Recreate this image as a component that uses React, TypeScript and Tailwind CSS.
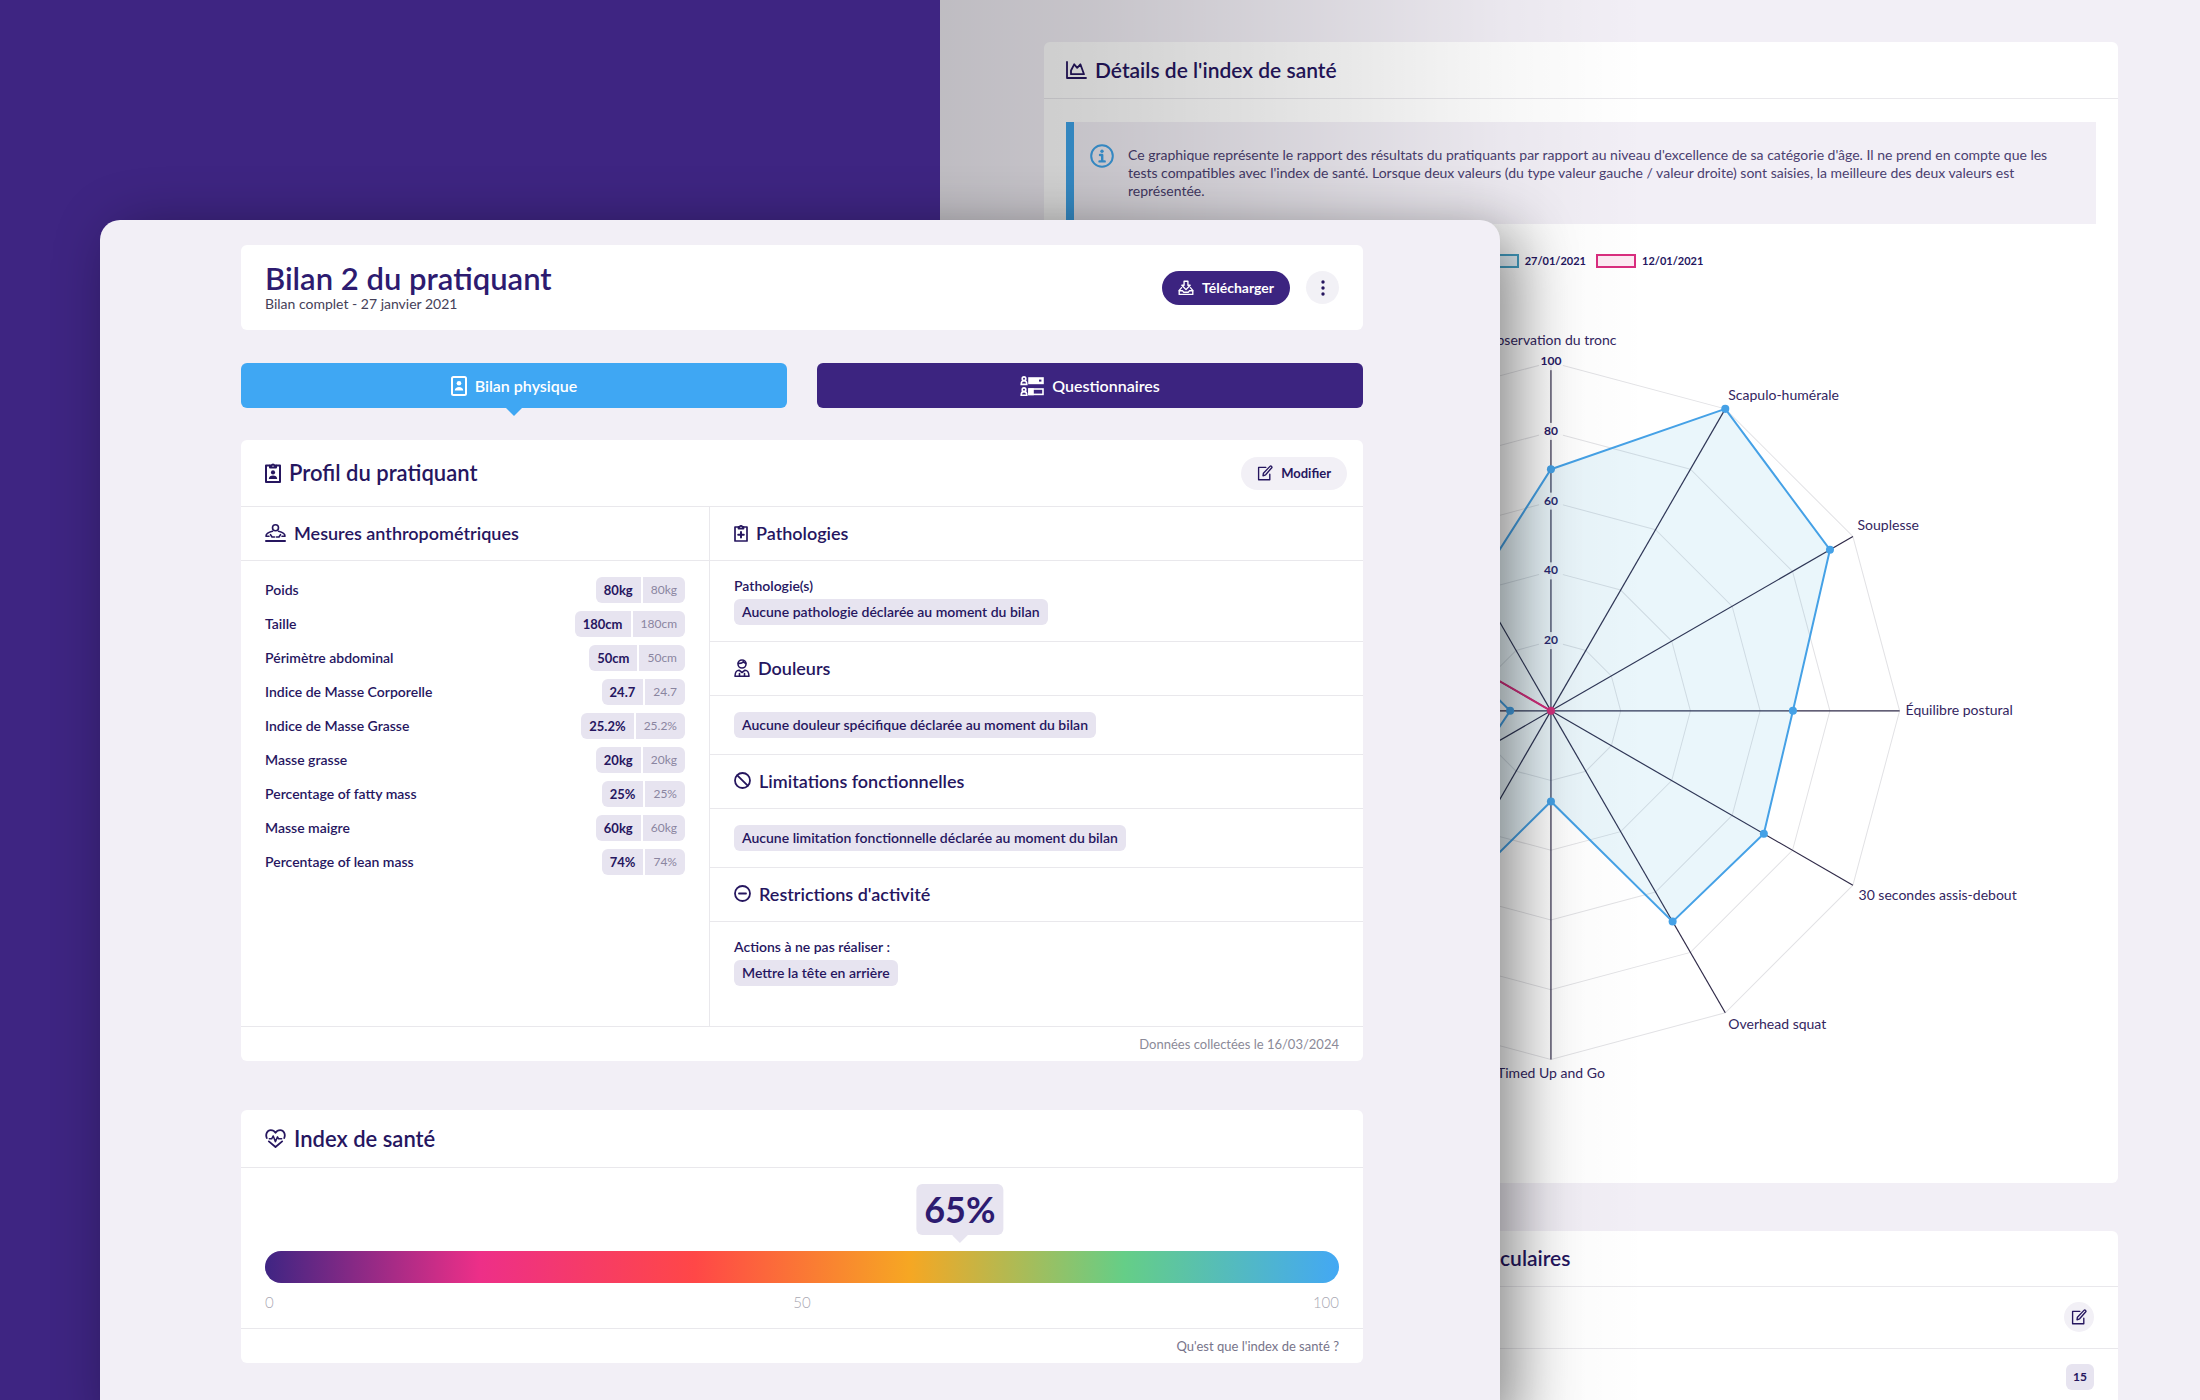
import type { ReactNode } from "react";

type IconProps = { className?: string };

function Svg({ className, box, children, width = 2 }: { className?: string; box: string; children: ReactNode; width?: number }) {
  return (
    <svg
      className={className}
      viewBox={box}
      fill="none"
      stroke="currentColor"
      strokeWidth={width}
      strokeLinecap="round"
      strokeLinejoin="round"
      aria-hidden="true"
    >
      {children}
    </svg>
  );
}

const DownloadIcon = ({ className }: IconProps) => (
  <Svg className={className} box="0 0 20 20" width={1.7}>
    <path d="M7.6 1.5h4.8v5h2.8L10 12 4.8 6.5h2.8z" />
    <path d="M4.5 9.5 1.5 13v5h17v-5l-3-3.5" />
    <path d="M1.5 13.5h4.3l1.2 1.8h6l1.2-1.8h4.3" />
  </Svg>
);

const DotsIcon = ({ className }: IconProps) => (
  <svg className={className} viewBox="0 0 4 16" fill="currentColor" aria-hidden="true">
    <circle cx="2" cy="2" r="1.7" />
    <circle cx="2" cy="8" r="1.7" />
    <circle cx="2" cy="14" r="1.7" />
  </svg>
);

const BadgeIcon = ({ className }: IconProps) => (
  <Svg className={className} box="0 0 16 20">
    <rect x="1" y="1" width="14" height="18" rx="1.5" />
    <circle cx="8" cy="7.2" r="2.3" fill="currentColor" stroke="none" />
    <path d="M3.8 14.6c0-2.4 2-3.6 4.2-3.6s4.2 1.2 4.2 3.6z" fill="currentColor" stroke="none" />
  </Svg>
);

const FormIcon = ({ className }: IconProps) => (
  <svg className={className} viewBox="0 0 24 20" fill="none" stroke="currentColor" strokeWidth="1.6" aria-hidden="true">
    <circle cx="4" cy="2.7" r="1.8" />
    <path d="M1.2 8.4c0-2.2.9-3.6 2.8-3.6s2.8 1.4 2.8 3.6z" />
    <circle cx="4" cy="13.7" r="1.8" />
    <path d="M1.2 19.2c0-2.2.9-3.6 2.8-3.6s2.8 1.4 2.8 3.6z" />
    <rect x="9" y="2" width="14" height="5.4" fill="currentColor" />
    <rect x="19" y="3.6" width="2.4" height="2" fill="#3c2480" stroke="none" />
    <rect x="9" y="13" width="14" height="5.4" />
    <path d="M9 13h4v5.4H9z" fill="currentColor" />
  </svg>
);

const ClipboardUserIcon = ({ className }: IconProps) => (
  <Svg className={className} box="0 0 16 21">
    <path d="M4.5 3.5H1V20h14V3.5h-3.5" />
    <path d="M5 5.6V3.4h1.6a1.5 1.5 0 0 1 2.8 0H11v2.2z" />
    <circle cx="8" cy="10.4" r="2.1" fill="currentColor" stroke="none" />
    <path d="M3.8 17c0-2.4 2-3.5 4.2-3.5s4.2 1.1 4.2 3.5z" fill="currentColor" stroke="none" />
  </Svg>
);

const EditIcon = ({ className }: IconProps) => (
  <Svg className={className} box="0 0 20 20" width={1.7}>
    <path d="M11 3H2v15.500h14V11.500" />
    <path d="M7.500 13.500 8 10.200 16.200 1.700a1.400 1.400 0 0 1 2 2L10.800 12.200z" />
  </Svg>
);

const MeasureIcon = ({ className }: IconProps) => (
  <Svg className={className} box="0 0 21 18" width={1.6}>
    <circle cx="10.5" cy="3.800" r="3" />
    <path d="M7.500 7.200C4 7.900 1 9.600 1 12.200h3M13.500 7.200c3.500.700 6.500 2.400 6.500 5h-3" />
    <path d="M5.500 10.600 7 13h2.500M15.500 10.600 14 13h-2.500" />
    <path d="M1 17h19" strokeWidth="2" />
  </Svg>
);

const ClipboardPlusIcon = ({ className }: IconProps) => (
  <Svg className={className} box="0 0 14 18" width={1.7}>
    <path d="M4 3H1v14h12V3h-3" />
    <path d="M4.500 4.600V2.800h1.200a1.400 1.400 0 0 1 2.600 0h1.200v1.800z" />
    <path d="M7 8v5.600M4.200 10.800h5.600" strokeWidth="2" />
  </Svg>
);

const PersonIcon = ({ className }: IconProps) => (
  <Svg className={className} box="0 0 16 18" width={1.6}>
    <circle cx="8" cy="5" r="4" />
    <path d="M4.300 4.200c2.500.500 4-.300 5-1.500.700.900 1.500 1.400 2.500 1.500" />
    <path d="M1 17.200c0-3.800 2-6 4-6l3 2.300 3-2.300c2 0 4 2.200 4 6z" />
    <path d="M5.500 14.500v2.500M10.500 14.500v2.500" />
  </Svg>
);

const BanIcon = ({ className }: IconProps) => (
  <Svg className={className} box="0 0 17 17" width={1.8}>
    <circle cx="8.5" cy="8.500" r="7.500" />
    <path d="m3.300 3.300 10.400 10.400" />
  </Svg>
);

const MinusCircleIcon = ({ className }: IconProps) => (
  <Svg className={className} box="0 0 17 17" width={1.8}>
    <circle cx="8.5" cy="8.500" r="7.500" />
    <path d="M5 8.500h7" />
  </Svg>
);

const HeartIcon = ({ className }: IconProps) => (
  <Svg className={className} box="0 0 22 20" width={1.9}>
    <path d="M1.800 9.500C.200 5.500 2.300 1.200 6 1.200c2.200 0 3.900 1 5 2.800 1.100-1.800 2.800-2.800 5-2.800 3.700 0 5.800 4.300 4.200 8.300" />
    <path d="M4 13l7 6 7-6" />
    <path d="M4.500 10.300H7l1.600-3 2.300 6 2.200-5 1.200 2h3.200" strokeWidth="1.600" />
  </Svg>
);

const AreaChartIcon = ({ className }: IconProps) => (
  <Svg className={className} box="0 0 21 18" width={1.8}>
    <path d="M1 1v16h19" />
    <path d="M5 13.200V9.500l3.200-6.200 3 3.600 3.200-3.600 3.600 9.900z" />
  </Svg>
);

const InfoIcon = ({ className }: IconProps) => (
  <Svg className={className} box="0 0 24 24" width={2}>
    <circle cx="12" cy="12" r="10.800" />
    <circle cx="12" cy="7.200" r="1.700" fill="currentColor" stroke="none" />
    <path d="M10 11h2.200v6.200M9.500 17.400h5.200" strokeWidth="2.400" />
  </Svg>
);

const measures: [string, string][] = [
  ["Poids", "80kg"],
  ["Taille", "180cm"],
  ["Périmètre abdominal", "50cm"],
  ["Indice de Masse Corporelle", "24.7"],
  ["Indice de Masse Grasse", "25.2%"],
  ["Masse grasse", "20kg"],
  ["Percentage of fatty mass", "25%"],
  ["Masse maigre", "60kg"],
  ["Percentage of lean mass", "74%"],
];

const CX = 484;
const CY = 431;
const R = 348;

function polar(axis: number, value: number): [number, number] {
  const a = (axis * Math.PI) / 6;
  const r = (R * value) / 100;
  return [CX + r * Math.sin(a), CY - r * Math.cos(a)];
}

const toPoints = (values: number[]) => values.map((v, i) => polar(i, v).join(",")).join(" ");

const current = [69.3, 100, 92.4, 69.4, 70.5, 69.8, 26, 70, 22, 11.7, 32, 42];
const previous = [0, 0, 0, 0, 0, 0, 0, 0, 0, 0, 40, 0];

const axisLabels: { text: string; x: number; y: number; middle?: boolean }[] = [
  { text: "Observation du tronc", x: 484, y: 66, middle: true },
  { text: "Scapulo-humérale", x: 661, y: 121 },
  { text: "Souplesse", x: 790, y: 251 },
  { text: "Équilibre postural", x: 838, y: 435 },
  { text: "30 secondes assis-debout", x: 791, y: 620 },
  { text: "Overhead squat", x: 661, y: 749 },
  { text: "Timed Up and Go", x: 484, y: 797, middle: true },
];

function Radar() {
  return (
    <svg className="block h-auto w-full" viewBox="0 0 1028 882" role="img" aria-label="Index de santé par test">
      {[20, 40, 60, 80, 100].map((v) => (
        <polygon key={v} points={toPoints(Array(12).fill(v))} fill="none" stroke="#e2e2e5" />
      ))}
      {current.map((_, i) => {
        const [x, y] = polar(i, 100);
        return <line key={i} x1={CX} y1={CY} x2={x} y2={y} stroke="#2f2a48" strokeWidth="1.2" />;
      })}
      {[20, 40, 60, 80, 100].map((v) => {
        const y = polar(0, v)[1];
        return (
          <g key={v}>
            <rect x={CX - 12} y={y - 9} width="24" height="17" fill="#fff" fillOpacity="0.9" />
            <text x={CX} y={y + 3} textAnchor="middle" className="fill-[#2a1a66] text-[12px] font-bold">
              {v}
            </text>
          </g>
        );
      })}
      <polygon points={toPoints(current)} fill="#2fa4dc" fillOpacity="0.1" stroke="#45a1e6" strokeWidth="2" />
      {current.map((v, i) => {
        const [x, y] = polar(i, v);
        return <circle key={i} cx={x} cy={y} r="4" fill="#45a1e6" />;
      })}
      <polygon points={toPoints(previous)} fill="#e62e85" fillOpacity="0.1" stroke="#d92d7e" strokeWidth="2" />
      <circle cx={CX} cy={CY} r="4" fill="#d1307c" />
      {axisLabels.map((l) => (
        <text key={l.text} x={l.x} y={l.y} textAnchor={l.middle ? "middle" : "start"} className="fill-[#33265f] text-[14px]">
          {l.text}
        </text>
      ))}
    </svg>
  );
}

const Tag = ({ children }: { children: ReactNode }) => (
  <span className="inline-block h-[26px] rounded-md bg-[#e7e4f0] px-2 leading-[26px] font-semibold">{children}</span>
);

function SubHeader({ icon, children }: { icon: ReactNode; children: ReactNode }) {
  return (
    <h3 className="flex h-[54px] items-center gap-2 border-b border-[#e9e8ec] px-6 pb-0.5 text-lg font-semibold">
      {icon}
      {children}
    </h3>
  );
}

function BackPage() {
  return (
    <div className="relative ml-[940px] min-h-screen bg-[#f2eff6] pt-[42px] pr-[82px] pl-[104px]">
      <section className="rounded-md bg-white">
        <h2 className="flex h-[57px] items-center gap-2 border-b border-[#e9e8ec] px-[22px] text-[21px] font-semibold">
          <AreaChartIcon className="h-[18px] w-[21px]" />
          Détails de l'index de santé
        </h2>
        <div className="px-[22px] pt-[23px] pb-5">
          <div className="flex gap-3.5 border-l-8 border-[#3fa4ea] bg-[#f2eff6] pt-6 pr-9 pb-6 pl-4">
            <InfoIcon className="-mt-0.5 h-6 w-6 shrink-0 text-[#3fa4ea]" />
            <p className="leading-[18px] text-[#4a4070]">
              Ce graphique représente le rapport des résultats du pratiquants par rapport au niveau d'excellence de sa
              catégorie d'âge. Il ne prend en compte que les tests compatibles avec l'index de santé. Lorsque deux
              valeurs (du type valeur gauche / valeur droite) sont saisies, la meilleure des deux valeurs est
              représentée.
            </p>
          </div>
          <div className="mt-[29px] flex items-center justify-center gap-2.5 pl-5 text-[11px] leading-4 font-bold">
            <span className="flex items-center gap-1.5">
              <span className="h-3.5 w-10 border-2 border-[#45a1c6] bg-[#e9f5fc]" />
              27/01/2021
            </span>
            <span className="flex items-center gap-1.5">
              <span className="h-3.5 w-10 border-2 border-[#d92d7e] bg-[#fdeaf3]" />
              12/01/2021
            </span>
          </div>
          <div className="mt-2.5">
            <Radar />
          </div>
        </div>
      </section>

      <section className="mt-12 rounded-md bg-white">
        <h2 className="flex h-14 items-center gap-2 border-b border-[#e9e8ec] px-[22px] text-[21px] font-semibold">
          <ClipboardUserIcon className="h-[21px] w-4" />
          Évaluations des capacités articulaires et musculaires
        </h2>
        <div className="flex h-[62px] items-center justify-end border-b border-[#e9e8ec] px-6">
          <button type="button" aria-label="Modifier les résultats" className="flex size-[30px] items-center justify-center rounded-full bg-[#f2f0f6]">
            <EditIcon className="size-4" />
          </button>
        </div>
        <div className="flex h-14 items-center justify-end px-6">
          <span className="h-[26px] rounded-md bg-[#e7e4f0] px-[7px] text-[12px] leading-[26px] font-bold">15</span>
        </div>
      </section>

      <div className="pointer-events-none absolute inset-0 bg-[linear-gradient(to_right,rgba(0,0,0,0.21),rgba(0,0,0,0.18)_12%,rgba(0,0,0,0.11)_28%,rgba(0,0,0,0.03)_45%,rgba(0,0,0,0)_56%)]" />
    </div>
  );
}

function FrontPage() {
  return (
    <main className="absolute top-[220px] right-[700px] left-[100px] min-h-[1200px] rounded-[20px] bg-[#f2eff6] pt-[25px] pr-[137px] pl-[141px] shadow-[16px_12px_60px_rgba(0,0,0,0.44)]">
      <header className="flex h-[85px] items-center justify-between rounded-md bg-white px-6">
        <div>
          <h1 className="text-[31px] leading-8 font-semibold text-[#2d1b70]">Bilan 2 du pratiquant</h1>
          <p className="leading-5 text-[#454158]">Bilan complet - 27 janvier 2021</p>
        </div>
        <div className="flex items-center gap-4">
          <button type="button" className="flex h-[34px] items-center gap-2 rounded-full bg-[#3c2480] px-4 font-bold text-white">
            <DownloadIcon className="size-4" />
            Télécharger
          </button>
          <button type="button" aria-label="Plus d'options" className="flex size-[33px] items-center justify-center rounded-full bg-[#f2f1f6]">
            <DotsIcon className="h-4 w-1" />
          </button>
        </div>
      </header>

      <nav className="mt-[33px] grid grid-cols-2 gap-[30px] text-base font-semibold text-white">
        <button type="button" className="relative flex h-[45px] items-center justify-center gap-2 rounded-md bg-[#3fa7f3]">
          <BadgeIcon className="h-5 w-4" />
          Bilan physique
          <span className="absolute top-full left-1/2 h-2 w-4 -translate-x-1/2 bg-[#3fa7f3] [clip-path:polygon(0_0,100%_0,50%_100%)]" />
        </button>
        <button type="button" className="flex h-[45px] items-center justify-center gap-2 rounded-md bg-[#3c2480]">
          <FormIcon className="h-5 w-6" />
          Questionnaires
        </button>
      </nav>

      <section className="mt-8 rounded-md bg-white">
        <div className="flex h-[67px] items-center justify-between border-b border-[#e9e8ec] pr-4 pl-6">
          <h2 className="flex items-center gap-2 text-[22px] font-semibold">
            <ClipboardUserIcon className="h-[21px] w-4" />
            Profil du pratiquant
          </h2>
          <button type="button" className="flex h-[33px] items-center gap-2 rounded-full bg-[#f2f0f6] px-4 text-[13px] font-bold">
            <EditIcon className="size-4" />
            Modifier
          </button>
        </div>
        <div className="grid grid-cols-[468fr_654fr]">
          <div>
            <SubHeader icon={<MeasureIcon className="h-[18px] w-[21px]" />}>Mesures anthropométriques</SubHeader>
            <dl className="flex flex-col gap-2 px-6 pt-4 font-semibold">
              {measures.map(([label, value]) => (
                <div key={label} className="flex h-[26px] items-center justify-between">
                  <dt>{label}</dt>
                  <dd className="flex gap-0.5 leading-[26px]">
                    <span className="rounded-l-md bg-[#e7e4f0] px-2 text-[13px] font-bold">{value}</span>
                    <span className="rounded-r-md bg-[#e7e4f0] px-2 text-[12px] font-normal text-[#8a85a0]">{value}</span>
                  </dd>
                </div>
              ))}
            </dl>
          </div>
          <div className="border-l border-[#e9e8ec]">
            <SubHeader icon={<ClipboardPlusIcon className="h-[18px] w-3.5" />}>Pathologies</SubHeader>
            <div className="border-b border-[#e9e8ec] px-6 py-4">
              <p className="mb-1 leading-[18px] font-semibold">Pathologie(s)</p>
              <Tag>Aucune pathologie déclarée au moment du bilan</Tag>
            </div>
            <SubHeader icon={<PersonIcon className="h-[18px] w-4" />}>Douleurs</SubHeader>
            <div className="border-b border-[#e9e8ec] px-6 py-4">
              <Tag>Aucune douleur spécifique déclarée au moment du bilan</Tag>
            </div>
            <SubHeader icon={<BanIcon className="size-[17px]" />}>Limitations fonctionnelles</SubHeader>
            <div className="border-b border-[#e9e8ec] px-6 py-4">
              <Tag>Aucune limitation fonctionnelle déclarée au moment du bilan</Tag>
            </div>
            <SubHeader icon={<MinusCircleIcon className="size-[17px]" />}>Restrictions d'activité</SubHeader>
            <div className="px-6 pt-4 pb-10">
              <p className="mb-1 leading-[18px] font-semibold">Actions à ne pas réaliser :</p>
              <Tag>Mettre la tête en arrière</Tag>
            </div>
          </div>
        </div>
        <p className="h-[35px] border-t border-[#e9e8ec] px-6 text-right text-[13px] leading-[34px] text-[#8b8a98]">
          Données collectées le 16/03/2024
        </p>
      </section>

      <section className="mt-[49px] rounded-md bg-white">
        <h2 className="flex h-[58px] items-center gap-2 border-b border-[#e9e8ec] px-6 text-[22px] font-semibold">
          <HeartIcon className="h-[19px] w-[21px]" />
          Index de santé
        </h2>
        <div className="px-6 py-4">
          <div className="relative h-[67px]">
            <div className="absolute left-[64.7%] h-[51px] -translate-x-1/2 rounded-md bg-[#e7e4f0] px-2 text-[36px] leading-[51px] font-bold text-[#2d1b70]">
              65%
              <span className="absolute top-full left-1/2 h-2 w-4 -translate-x-1/2 bg-[#e7e4f0] [clip-path:polygon(0_0,100%_0,50%_100%)]" />
            </div>
          </div>
          <div
            role="meter"
            aria-label="Index de santé"
            aria-valuenow={65}
            aria-valuemin={0}
            aria-valuemax={100}
            className="h-8 rounded-full bg-[linear-gradient(to_right,#3f2583,#ed2f88_20%,#ff4747_40%,#f6a723_60%,#65ce87_80%,#43a8f4)]"
          />
          <div className="mt-[9px] grid grid-cols-3 text-[15px] leading-5 font-light text-[#a9a8b2]">
            <span>0</span>
            <span className="text-center">50</span>
            <span className="text-right">100</span>
          </div>
        </div>
        <p className="h-[35px] border-t border-[#e9e8ec] px-6 text-right text-[13px] leading-[34px] text-[#77748a]">
          <a href="#index">Qu'est que l'index de santé ?</a>
        </p>
      </section>
    </main>
  );
}

export default function App() {
  return (
    <div className="relative h-screen overflow-hidden bg-[#3e2582] font-['Lato',sans-serif] text-sm text-[#26165f]">
      <BackPage />
      <FrontPage />
    </div>
  );
}
